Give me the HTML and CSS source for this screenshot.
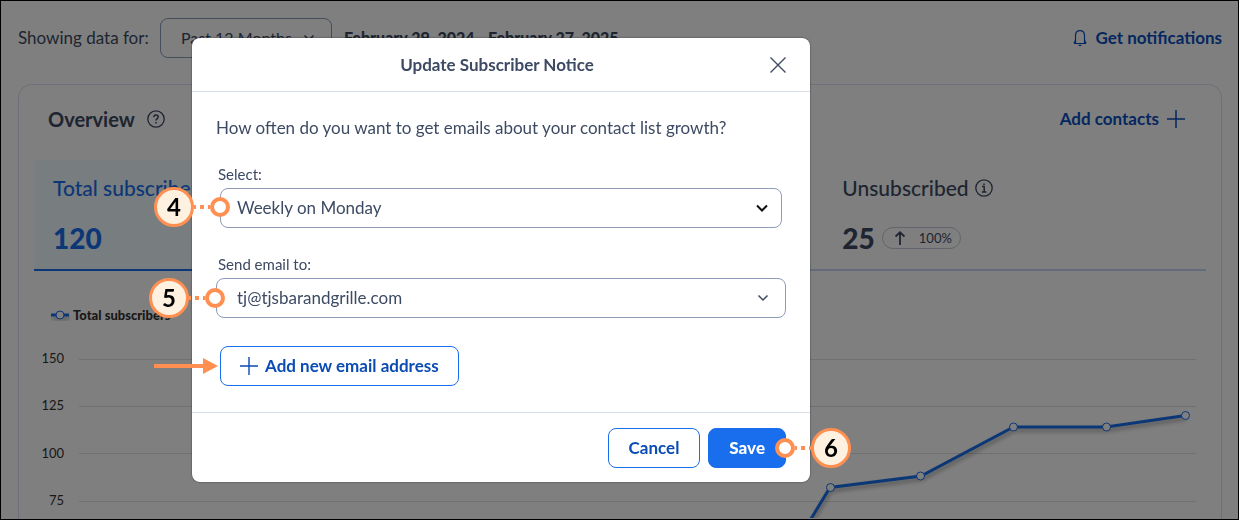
FILE: index.html
```html
<!DOCTYPE html>
<html lang="en">
<head>
<meta charset="utf-8">
<meta name="viewport" content="width=device-width, initial-scale=1">
<title>Update Subscriber Notice</title>
<link rel="stylesheet" href="styles.css">
</head>
<body>
<main class="page">
  <div class="toolbar">
    <label class="toolbar-label" for="period">Showing data for:</label>
    <div class="select period">
      <select id="period"><option>Past 12 Months</option></select>
      <svg class="chevron" width="12" height="12" viewBox="0 0 12 12"><path d="M1.500 3.500 6 8l4.500-4.500"/></svg>
    </div>
    <strong class="range">February 29, 2024 - February 27, 2025</strong>
    <a class="link notify" href="#">
      <svg width="14" height="18" viewBox="0 0 14 18" fill="none" stroke="currentColor" stroke-width="1.200"><path d="M1 14.500h12M2.500 14.500V6.500C2.500 3.500 4.300 1.600 7 1.600s4.500 1.900 4.500 4.900v8M2.500 11 1 14.500M11.500 11l1.500 3.500M5.800 15.800c.4 1 2 1 2.400 0"/></svg>
      Get notifications
    </a>
  </div>

  <section class="card">
    <div class="card-head">
      <h2 class="card-title">Overview</h2>
      <svg width="18" height="18" viewBox="0 0 18 18" fill="none" stroke="currentColor" stroke-width="1.300"><circle cx="9" cy="9" r="8.200"/><path d="M6.900 7.200C6.900 5.800 7.800 5 9 5s2.200.8 2.200 2C11.200 8.500 9 8.700 9 10.600" stroke-width="1.500"/><path d="M9 12v1.600" stroke-width="1.600"/></svg>
      <a class="link add" href="#">Add contacts
        <svg width="18" height="18" viewBox="0 0 18 18" fill="none" stroke="currentColor" stroke-width="1.500"><path d="M9 0v18M0 9h18"/></svg>
      </a>
    </div>

    <div class="stats">
      <div class="stat active">
        <h3 class="stat-name">Total subscribers</h3>
        <div class="stat-row"><span class="stat-value">120</span></div>
      </div>
      <div class="stat"></div>
      <div class="stat">
        <h3 class="stat-name">Unsubscribed
          <svg width="18" height="18" viewBox="0 0 18 18" fill="none" stroke="currentColor" stroke-width="1.300"><circle cx="9" cy="9" r="8.200"/><path d="M7 7.600h2.200v5M6.800 12.900h4.600M8.200 5.200h1.600" stroke-width="1.500"/></svg>
        </h3>
        <div class="stat-row">
          <span class="stat-value">25</span>
          <span class="pill"><svg width="12" height="14" viewBox="0 0 12 14" fill="none" stroke="currentColor" stroke-width="1.800"><path d="M6 14V1.500M1.500 5.500 6 1.300l4.500 4.200"/></svg>100%</span>
        </div>
      </div>
    </div>

    <div class="legend">
      <svg width="20" height="12" viewBox="0 0 20 12"><path class="series" d="M1 6h18"/><circle class="dot" cx="10" cy="6" r="4"/></svg>
      Total subscribers
    </div>
    <svg class="chart" viewBox="0 0 1172 190" role="img" aria-label="Total subscribers by month">
      <g class="grid"><path d="M45 31.500h1117M45 78.500h1117M45 125.500h1117M45 173.500h1117"/></g>
      <g class="axis"><text x="30" y="35">150</text><text x="30" y="82">125</text><text x="30" y="130">100</text><text x="30" y="177">75</text></g>
      <path class="series" d="M746 242 796 159.500 887 148 979.500 99H1072l79.500-11.500"/>
      <g class="dots"><circle class="dot" cx="796.500" cy="159.500" r="4"/><circle class="dot" cx="886.500" cy="148" r="4"/><circle class="dot" cx="979.500" cy="99" r="4"/><circle class="dot" cx="1072.500" cy="99" r="4"/><circle class="dot" cx="1151.500" cy="87.500" r="4"/></g>
    </svg>
  </section>
</main>

<div class="overlay">
  <form class="modal" role="dialog" aria-labelledby="dialog-title">
    <header class="modal-head">
      <h1 class="modal-title" id="dialog-title">Update Subscriber Notice</h1>
      <button class="close" type="button" aria-label="Close"><svg width="16" height="16" viewBox="0 0 16 16" fill="none" stroke="currentColor" stroke-width="1.400"><path d="m.5.5 15 15m0-15-15 15"/></svg></button>
    </header>
    <div class="modal-body">
      <p class="question">How often do you want to get emails about your contact list growth?</p>
      <div class="fields">
        <div class="field">
          <label for="frequency">Select:</label>
          <div class="select frequency">
            <select id="frequency"><option>Weekly on Monday</option></select>
            <svg class="chevron strong" width="12" height="12" viewBox="0 0 12 12"><path d="M1 3.500 6 8.500l5-5"/></svg>
          </div>
        </div>
        <div class="field">
          <label for="email">Send email to:</label>
          <div class="select">
            <select id="email"><option>tj@tjsbarandgrille.com</option></select>
            <svg class="chevron" width="12" height="12" viewBox="0 0 12 12"><path d="M1.500 3.500 6 8l4.500-4.500"/></svg>
          </div>
        </div>
      </div>
      <button class="btn add-email" type="button"><svg width="18" height="18" viewBox="0 0 18 18" fill="none" stroke="currentColor" stroke-width="1.400"><path d="M9 0v18M0 9h18"/></svg>Add new email address</button>
    </div>
    <footer class="modal-foot">
      <button class="btn" type="button">Cancel</button>
      <button class="btn primary" type="submit">Save</button>
    </footer>
  </form>

  <div class="callout step-4"><span class="badge">4</span><svg width="16" height="4"><path d="M0 2h16"/></svg><span class="ring"></span></div>
  <div class="callout step-5"><span class="badge">5</span><svg width="16" height="4"><path d="M0 2h16"/></svg><span class="ring"></span></div>
  <div class="callout step-6"><span class="ring"></span><svg width="16" height="4"><path d="M0 2h16"/></svg><span class="badge">6</span></div>
  <svg class="arrow" width="64" height="16" viewBox="0 0 64 16"><path d="M0 6h49V0l15 8-15 8v-6H0z"/></svg>
</div>
<div class="frame"></div>
</body>
</html>
```
FILE: styles.css
```css
* { box-sizing: border-box; }

body {
  margin: 0;
  background: #fff;
  color: #3d4a63;
  font: 17px/24px Lato, "Open Sans", sans-serif;
}

h1, h2, h3, p { margin: 0; }
svg { flex: none; }
button, select { font: inherit; color: inherit; }

.page {
  display: flex;
  flex-direction: column;
  height: 100vh;
  padding: 18px 17px 0 18px;
  overflow: hidden;
}

.toolbar { display: flex; flex: none; align-items: center; height: 40px; }
.toolbar-label { width: 142px; white-space: nowrap; }
.range { margin-left: 12px; font-size: 16px; font-weight: 900; white-space: nowrap; }

.link {
  display: flex;
  align-items: center;
  margin-left: auto;
  color: #0a4fc0;
  font-weight: 700;
  text-decoration: none;
}
.notify { gap: 9px; }
.add { gap: 8px; }

.select { display: grid; align-items: center; }
.select select {
  grid-area: 1 / 1;
  width: 100%;
  height: 40px;
  padding: 0 20px;
  border: 1px solid #8d9bb8;
  border-radius: 8px;
  background: #fff;
  appearance: none;
}
.chevron {
  grid-area: 1 / 1;
  justify-self: end;
  margin-right: 17px;
  fill: none;
  stroke: #3d4a63;
  stroke-width: 1.5;
  pointer-events: none;
}
.chevron.strong { stroke: #111; stroke-width: 2; }
.period { width: 172px; }
.period select { font-size: 16px; }

.card {
  flex: 1;
  min-height: 0;
  margin-top: 26px;
  padding: 20px 15px 0;
  border: 1px solid #dcdff0;
  border-bottom: 0;
  border-radius: 14px 14px 0 0;
  overflow: hidden;
}
.card-head {
  display: flex;
  align-items: center;
  gap: 12px;
  height: 28px;
  padding: 0 21px 0 14px;
}
.card-title { font-size: 20px; font-weight: 700; }

.stats {
  display: grid;
  grid-template-columns: repeat(3, 1fr);
  column-gap: 12px;
  height: 111px;
  margin-top: 27px;
  border-bottom: 2px solid #c8d6fa;
}
.stat { padding: 14px 19px 0; }
.stat.active {
  margin-bottom: -2px;
  border-bottom: 2px solid #196eee;
  background: #f0faff;
  color: #196eee;
}
.stat-name { display: flex; align-items: center; gap: 6px; height: 28px; font-size: 21px; font-weight: 500; white-space: nowrap; }
.stat-row { display: flex; align-items: center; gap: 7px; height: 32px; margin-top: 20px; }
.stat-value { font-size: 28px; font-weight: 900; }
.pill {
  display: flex;
  align-items: center;
  gap: 13px;
  height: 22px;
  padding: 0 8px 0 11px;
  border: 1px solid #c6cad8;
  border-radius: 11px;
  font-size: 13px;
}

.legend {
  display: flex;
  align-items: center;
  gap: 3px;
  margin: 32px 0 0 16px;
  color: #333;
  font-size: 13px;
  font-weight: 900;
}
.series { fill: none; stroke: #196eee; stroke-width: 3; filter: drop-shadow(1px 3px 2px rgb(0 0 0 / 35%)); }
.dot { fill: #fff; stroke: #196eee; stroke-width: 1; }
.chart { display: block; width: 100%; margin-top: 1px; }
.grid { stroke: #e0e0e0; fill: none; }
.axis { fill: #333; font-size: 13px; text-anchor: end; }

.overlay { position: fixed; inset: 0; padding: 38px 0 0 192px; background: rgb(0 0 0 / 50%); }

.modal {
  width: 618px;
  border-radius: 8px;
  background: #fff;
  box-shadow: 0 0 2px rgb(0 0 0 / 60%);
}
.modal-head {
  display: grid;
  align-items: center;
  height: 54px;
  padding: 0 24px 0 16px;
  border-bottom: 1px solid #d8e0ea;
}
.modal-title { grid-area: 1 / 1; font-size: 17px; font-weight: 700; text-align: center; }
.close { grid-area: 1 / 1; justify-self: end; display: flex; padding: 0; border: 0; background: none; }

.modal-body { padding: 24px 24px 26px; }
.question { white-space: nowrap; }
.fields { display: grid; gap: 26px; margin-top: 24px; }
.field label { display: block; margin-bottom: 4px; padding-left: 2px; font-size: 15px; line-height: 20px; }
.frequency { margin: 0 4px; }
.frequency select { padding: 0 16px; }
.frequency .chevron { margin-right: 14px; }

.btn {
  display: flex;
  align-items: center;
  justify-content: center;
  gap: 7px;
  height: 40px;
  padding: 0 20px;
  border: 1px solid #196eee;
  border-radius: 8px;
  background: #fff;
  color: #0a4bb4;
  font-weight: 700;
}
.btn.primary { background: #196eee; color: #fff; font-weight: 900; }
.add-email { margin: 28px 0 0 4px; padding: 0 19px; }
.modal-foot {
  display: flex;
  justify-content: flex-end;
  gap: 8px;
  padding: 15px 24px 14px;
  border-top: 1px solid #d8e0ea;
}

.callout { position: absolute; display: flex; align-items: center; }
.callout path { stroke: #ff9052; stroke-width: 4; stroke-dasharray: 4 4; stroke-dashoffset: 2; }
.badge {
  display: grid;
  place-items: center;
  width: 40px;
  height: 40px;
  border: 3px solid #ff9052;
  border-radius: 50%;
  background: #fff1df;
  color: #000;
  font-size: 24px;
  font-weight: 700;
}
.ring { width: 20px; height: 20px; border: 4px solid #ff9052; border-radius: 50%; background: #fff; }
.step-4 { left: 154px; top: 187px; }
.step-5 { left: 149px; top: 278px; }
.step-6 { left: 775px; top: 428px; }
.arrow { position: absolute; left: 154px; top: 358px; fill: #ff9052; }

.frame { position: fixed; inset: 0; border: 1px solid #000; pointer-events: none; }
```
